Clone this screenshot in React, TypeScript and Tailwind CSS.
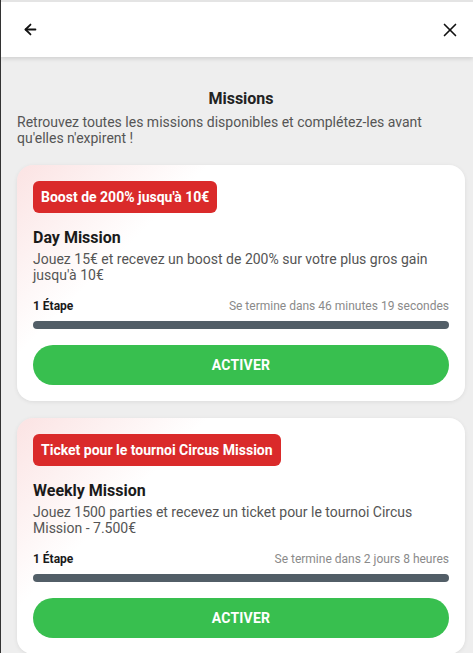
import { ArrowLeft, X } from "lucide-react"

const missions = [
  {
    badge: "Boost de 200% jusqu'à 10€",
    title: "Day Mission",
    desc: "Jouez 15€ et recevez un boost de 200% sur votre plus gros gain jusqu'à 10€",
    ends: ["46 minutes", "19 secondes"],
  },
  {
    badge: "Ticket pour le tournoi Circus Mission",
    title: "Weekly Mission",
    desc: "Jouez 1500 parties et recevez un ticket pour le tournoi Circus Mission - 7.500€",
    ends: ["2 jours", "8 heures"],
  },
]

export default function App() {
  return (
    <div
      className="h-[653px] overflow-hidden bg-[#eeeeee] border-l border-[#333333]"
      style={{ fontFamily: "Roboto, 'Liberation Sans', sans-serif" }}
    >
      {/* Header */}
      <header className="relative z-10 h-[57px] bg-white border-t-2 border-[#e4e4e4] flex items-center justify-between pl-[21px] pr-[12px] shadow-[0_2px_4px_rgba(0,0,0,0.12)]">
        <ArrowLeft className="w-[17px] h-[17px] text-[#111]" strokeWidth={2.5} />
        <X className="w-[22px] h-[22px] text-[#111]" strokeWidth={1.8} />
      </header>

      <div className="pl-4 pr-2">
        <h1 className="text-center text-[16px] font-bold text-[#222] mt-[32px] leading-[20px]">Missions</h1>
        <p className="text-[14px] text-[#555] leading-[16px] mt-[5px]">
          Retrouvez toutes les missions disponibles et complétez-les avant qu'elles n'expirent !
        </p>

        <div className="flex flex-col gap-[17px] mt-[19px]">
          {missions.map((m) => (
            <div
              key={m.title}
              className="rounded-[16px] p-4 shadow-[0_1px_4px_rgba(0,0,0,0.08)]"
              style={{ background: "linear-gradient(135deg, #fbe3e3 0%, #ffffff 28%, #ffffff 100%)" }}
            >
              <span className="inline-block bg-[#da2a2a] text-white font-bold text-[14px] leading-[32px] h-[32px] px-2 rounded-[6px]">
                {m.badge}
              </span>
              <h2 className="text-[16px] font-bold text-[#1a1a1a] mt-[15px] leading-[20px]">{m.title}</h2>
              <p className="text-[14px] text-[#555] leading-[16px] mt-[3px]">{m.desc}</p>
              <div className="flex items-baseline justify-between mt-[14px]">
                <span className="text-[12px] font-bold text-[#1a1a1a]">1 Étape</span>
                <span className="text-[12px] text-[#8a8a8a] flex gap-[3px]">
                  <span>Se termine dans</span>
                  <span>{m.ends[0]}</span>
                  <span>{m.ends[1]}</span>
                </span>
              </div>
              <div className="h-[8px] rounded-full bg-[#525e67] mt-[6px]" />
              <button className="w-full h-[40px] mt-[16px] rounded-full bg-[#38bf4f] text-white font-bold text-[14px] tracking-[0.2px]">
                ACTIVER
              </button>
            </div>
          ))}
        </div>
      </div>
    </div>
  )
}
